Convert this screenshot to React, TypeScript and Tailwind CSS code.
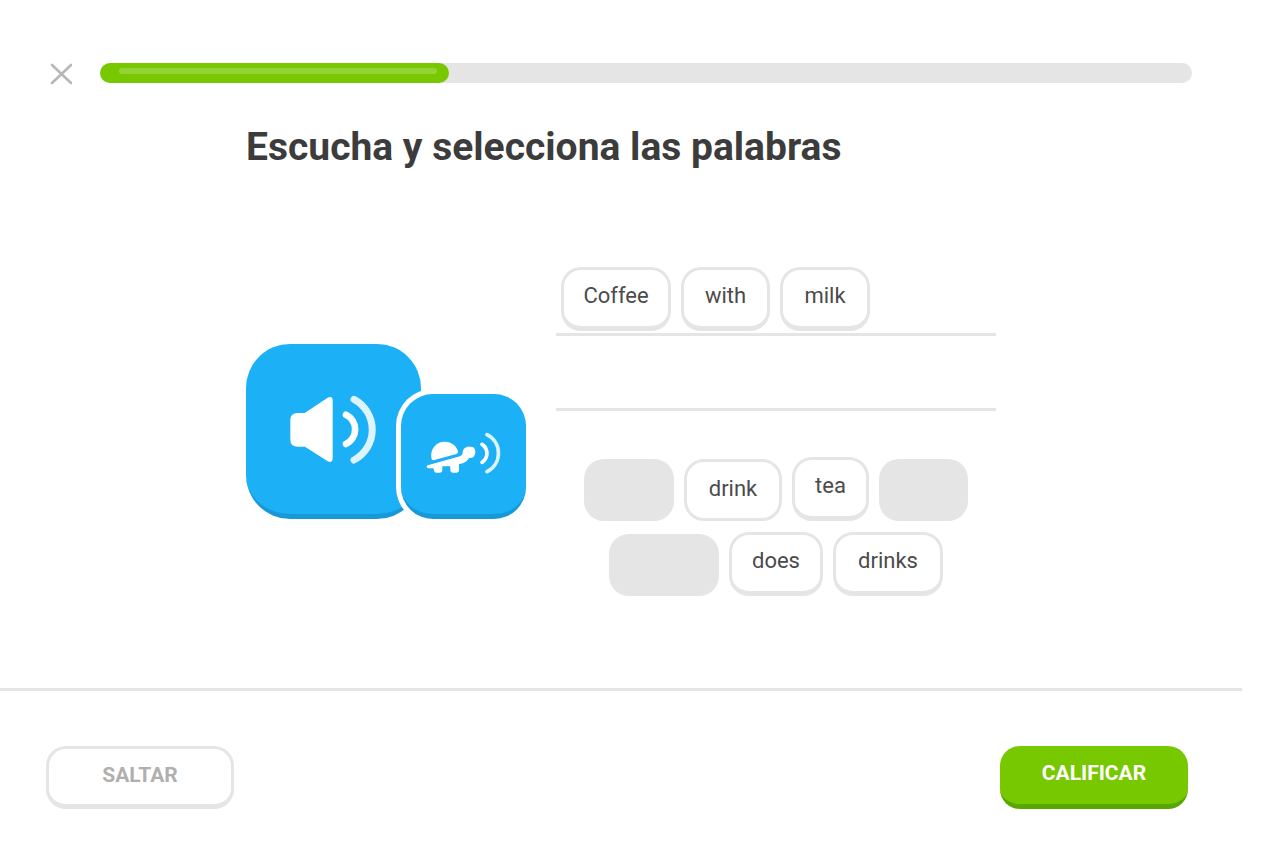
import { useState } from "react";

type Word = { text: string; width: string; pressed?: boolean };

const answer: Word[] = [
  { text: "Coffee", width: "w-[110px]" },
  { text: "with", width: "w-[89px]" },
  { text: "milk", width: "w-[90px]" },
];

const bank: Word[] = [
  { text: "milk", width: "w-[90px]" },
  { text: "drink", width: "w-[98px]", pressed: true },
  { text: "tea", width: "w-[77px]" },
  { text: "with", width: "w-[89px]" },
  { text: "Coffee", width: "w-[110px]" },
  { text: "does", width: "w-[94px]" },
  { text: "drinks", width: "w-[110px]" },
];

function WordChip({ word }: { word: Word }) {
  const edge = word.pressed ? "mt-[2px] h-[62px] border-b-[3px] pb-[2px]" : "h-16 border-b-[5px] pb-1";
  return (
    <button
      type="button"
      className={`${word.width} ${edge} rounded-[20px] border-[3px] border-[#e5e5e5] bg-white text-[22px] leading-7 text-[#4b4b4b]`}
    >
      {word.text}
    </button>
  );
}

function UsedSlot({ word }: { word: Word }) {
  return <div className={`${word.width} mt-[2px] h-[62px] rounded-[20px] bg-[#e5e5e5]`} />;
}

function SpeakerIcon() {
  return (
    <svg width="90" height="72" viewBox="27 27 270 216" fill="none" aria-hidden="true">
      <path
        fill="#fff"
        d="M53 84H74L143 38Q158 32 158 47V220Q158 235 143 229L75 185H53Q31 185 31 164V105Q31 84 53 84Z"
      />
      <path d="M198 89A49 49 0 0 1 198 177" stroke="#fff" strokeWidth="20" strokeLinecap="round" />
      <path d="M222 43A103 103 0 0 1 222 225" stroke="#ddf4ff" strokeWidth="21" strokeLinecap="round" />
    </svg>
  );
}

function TurtleIcon() {
  return (
    <svg width="80" height="42" viewBox="26 36 240 126" fill="none" aria-hidden="true">
      <path
        fill="#fff"
        d="M54 121Q49 121 48 113C44 88 62 65 88 65C109 65 124 78 128 94Q129 100 123 102Z"
      />
      <path
        fill="#fff"
        d="M37 136L134 109Q141 107 142 99C142 87 150 80 160 80H166Q180 80 180 96Q180 113 166 114H161C157 123 148 130 131 132V151Q131 158 124 158H112Q105 158 105 151V139H81V151Q81 158 74 158H62Q56 158 56 151L54 145H40Q35 145 34 141Q34 137 37 136Z"
      />
      <path d="M200 73A32 32 0 0 1 200 127" stroke="#fff" strokeWidth="11" strokeLinecap="round" />
      <path d="M215 44A62 62 0 0 1 215 155" stroke="#ddf4ff" strokeWidth="11" strokeLinecap="round" />
    </svg>
  );
}

export default function App() {
  const [progress] = useState(32);

  return (
    <div className="flex min-h-screen flex-col bg-white pr-[21px] font-['Roboto','Noto_Sans',sans-serif]">
      <header className="flex items-center gap-7 pt-[63px] pr-[50px] pl-[50px]">
        <button type="button" aria-label="Cerrar" className="flex h-5 w-[22px] items-center">
          <svg width="22" height="22" viewBox="0 0 22 22" className="mt-[2px] shrink-0" aria-hidden="true">
            <path d="M2 2L21 20M21 2L2 20" stroke="#b7b7b7" strokeWidth="2.6" strokeLinecap="round" />
          </svg>
        </button>
        <div
          role="progressbar"
          aria-label="Progreso"
          aria-valuenow={progress}
          aria-valuemin={0}
          aria-valuemax={100}
          className="h-5 flex-1 rounded-full bg-[#e5e5e5]"
        >
          <div className="h-5 rounded-full bg-[#78c800] pt-[5px] pr-3 pl-[19px]" style={{ width: `${progress}%` }}>
            <div className="h-[6px] rounded-full bg-[#93d333]" />
          </div>
        </div>
      </header>

      <main className="mx-auto flex w-full max-w-[750px] flex-1 flex-col pt-[37px]">
        <h1 className="text-[39px] leading-[55px] font-bold text-[#3c3c3c]">Escucha y selecciona las palabras</h1>

        <div className="flex flex-1 items-center gap-[30px]">
          <div className="flex shrink-0 items-end">
            <button
              type="button"
              aria-label="Escuchar"
              className="flex h-[175px] w-[175px] items-center justify-center rounded-[44px] border-b-[5px] border-[#1899d6] bg-[#1cb0f6] pt-[2px]"
            >
              <SpeakerIcon />
            </button>
            <button
              type="button"
              aria-label="Escuchar despacio"
              className="-ml-5 flex h-[125px] w-[125px] items-center justify-center rounded-[32px] border-b-[5px] border-[#1899d6] bg-[#1cb0f6] pb-[2px] shadow-[0_0_0_5px_#ffffff]"
            >
              <TurtleIcon />
            </button>
          </div>

          <div className="flex-1">
            <div className="flex h-[75px] gap-[10px] border-b-[3px] border-[#e5e5e5] px-[5px] pt-[6px]">
              {answer.map((word) => (
                <WordChip key={word.text} word={word} />
              ))}
            </div>
            <div className="h-[75px] border-b-[3px] border-[#e5e5e5]" />
            <div className="mt-[46px] flex flex-wrap justify-center gap-x-[10px] gap-y-[11px] px-[10px] pb-[6px]">
              {bank.map((word) =>
                answer.some((a) => a.text === word.text) ? (
                  <UsedSlot key={word.text} word={word} />
                ) : (
                  <WordChip key={word.text} word={word} />
                ),
              )}
            </div>
          </div>
        </div>
      </main>

      <footer className="flex justify-between border-t-[3px] border-[#e5e5e5] pt-[55px] pr-[54px] pb-[53px] pl-[46px]">
        <button
          type="button"
          className="h-[63px] w-[188px] rounded-[20px] border-[3px] border-b-[5px] border-[#e5e5e5] bg-white pb-[2px] text-[21px] font-bold text-[#afafaf]"
        >
          SALTAR
        </button>
        <button
          type="button"
          className="h-[63px] w-[188px] rounded-[20px] border-b-[5px] border-[#58a700] bg-[#78c800] pb-[2px] text-[21px] font-bold text-white"
        >
          CALIFICAR
        </button>
      </footer>
    </div>
  );
}
